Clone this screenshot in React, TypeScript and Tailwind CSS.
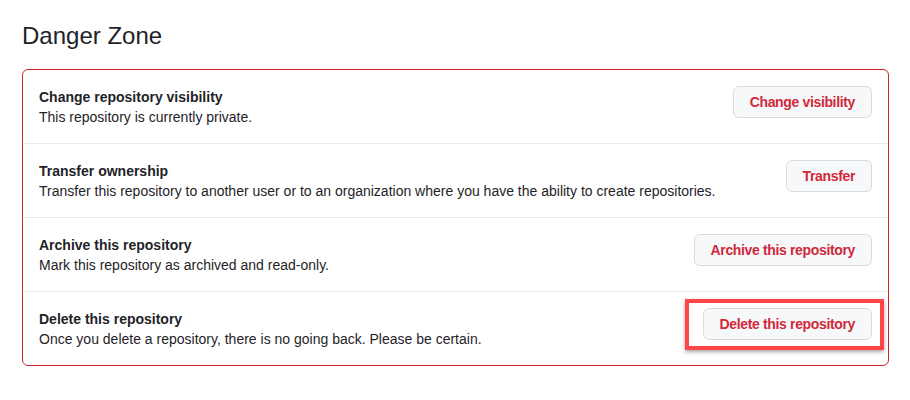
const rows = [
  {
    title: 'Change repository visibility',
    desc: 'This repository is currently private.',
    action: 'Change visibility',
  },
  {
    title: 'Transfer ownership',
    desc: 'Transfer this repository to another user or to an organization where you have the ability to create repositories.',
    action: 'Transfer',
  },
  {
    title: 'Archive this repository',
    desc: 'Mark this repository as archived and read-only.',
    action: 'Archive this repository',
  },
  {
    title: 'Delete this repository',
    desc: 'Once you delete a repository, there is no going back. Please be certain.',
    action: 'Delete this repository',
    highlight: true,
  },
];

export default function App() {
  return (
    <div
      className="w-[910px] h-[400px] bg-white text-[#1f2328] px-[22px] pt-[21px]"
      style={{ fontFamily: '"Liberation Sans", Arial, sans-serif' }}
    >
      <h2 className="text-[24px] leading-[30px] font-normal">Danger Zone</h2>
      <div className="mt-[18px] w-[867px] border border-[#d1242f] rounded-md">
        {rows.map((row, i) => (
          <div
            key={row.title}
            className={`flex items-center justify-between px-4 py-4 ${i > 0 ? 'border-t border-[#e8eaed]' : ''}`}
          >
            <div className="min-w-0 pt-px">
              <p className="text-sm leading-5 font-semibold">{row.title}</p>
              <p className="text-sm leading-5">{row.desc}</p>
            </div>
            <div className="relative mb-[9px] shrink-0">
              <button className="h-8 px-4 text-sm font-semibold tracking-[-0.35px] text-[#d1283a] bg-[#f6f8fa] border border-[#d8dce1] rounded-md">
                {row.action}
              </button>
              {row.highlight && (
                <div className="absolute -left-[18px] -right-[12px] -top-[9px] -bottom-[10px] border-[4px] border-[#ff4545] shadow-[0_2px_4px_rgba(0,0,0,0.35)] pointer-events-none" />
              )}
            </div>
          </div>
        ))}
      </div>
    </div>
  );
}
